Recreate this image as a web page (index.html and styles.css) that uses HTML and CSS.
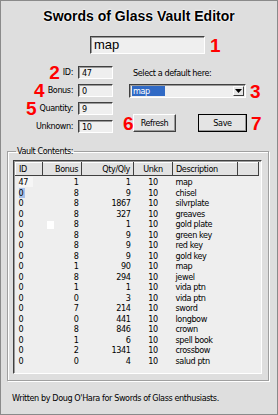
FILE: index.html
```html
<!DOCTYPE html>
<html lang="en">
<head>
    <meta charset="UTF-8">
    <title>Swords of Glass Vault Editor</title>
    <link rel="stylesheet" href="styles.css">
</head>
<body>

    <h1 class="title">Swords of Glass Vault Editor</h1>

    <div class="name-row">
        <div class="field big">map</div>
        <span class="mark">1</span>
    </div>

    <div class="editor">
        <div class="fields">
            <div class="label"><span class="mark">2</span>ID:</div>
            <div class="field">47</div>
            <div class="label"><span class="mark">4</span>Bonus:</div>
            <div class="field">0</div>
            <div class="label"><span class="mark">5</span>Quantity:</div>
            <div class="field">9</div>
            <div class="label">Unknown:</div>
            <div class="field">10</div>
        </div>

        <div class="defaults">
            <div class="hint">Select a default here:</div>
            <div class="pick-row">
                <div class="combo">
                    <span class="combo-value">map</span>
                    <span class="combo-btn">
                        <svg width="7" height="4" viewBox="0 0 7 4"><path d="M0 0h7L3.5 4z" fill="#000"/></svg>
                    </span>
                </div>
                <span class="mark">3</span>
            </div>
            <div class="buttons">
                <span class="mark">6</span>
                <button class="btn">Refresh</button>
                <button class="btn save">Save</button>
                <span class="mark">7</span>
            </div>
        </div>
    </div>

    <fieldset class="vault">
        <legend>Vault Contents:</legend>
        <div class="list">
            <table>
                <colgroup>
                    <col style="width: 27px">
                    <col style="width: 39px">
                    <col style="width: 52px">
                    <col style="width: 39px">
                    <col style="width: 65px">
                    <col>
                </colgroup>
                <thead>
                    <tr>
                        <th>ID</th>
                        <th class="r">Bonus</th>
                        <th class="r">Qty/Qly</th>
                        <th class="c">Unkn</th>
                        <th>Description</th>
                        <th></th>
                    </tr>
                </thead>
                <tbody>
                    <tr><td><span class="focus">47</span></td><td class="r">1</td><td class="r">1</td><td class="c">10</td><td>map</td><td></td></tr>
                    <tr><td><span class="sel">0</span></td><td class="r">8</td><td class="r">9</td><td class="c">10</td><td>chisel</td><td></td></tr>
                    <tr><td>0</td><td class="r">8</td><td class="r">1867</td><td class="c">10</td><td>silvrplate</td><td></td></tr>
                    <tr><td>0</td><td class="r">8</td><td class="r">327</td><td class="c">10</td><td>greaves</td><td></td></tr>
                    <tr><td>0</td><td class="r"><span class="blank"></span>8</td><td class="r">1</td><td class="c">10</td><td>gold plate</td><td></td></tr>
                    <tr><td>0</td><td class="r">8</td><td class="r">9</td><td class="c">10</td><td>green key</td><td></td></tr>
                    <tr><td>0</td><td class="r">8</td><td class="r">9</td><td class="c">10</td><td>red key</td><td></td></tr>
                    <tr><td>0</td><td class="r">8</td><td class="r">9</td><td class="c">10</td><td>gold key</td><td></td></tr>
                    <tr><td>0</td><td class="r">1</td><td class="r">90</td><td class="c">10</td><td>map</td><td></td></tr>
                    <tr><td>0</td><td class="r">8</td><td class="r">294</td><td class="c">10</td><td>jewel</td><td></td></tr>
                    <tr><td>0</td><td class="r">1</td><td class="r">1</td><td class="c">10</td><td>vida ptn</td><td></td></tr>
                    <tr><td>0</td><td class="r">0</td><td class="r">3</td><td class="c">10</td><td>vida ptn</td><td></td></tr>
                    <tr><td>0</td><td class="r">7</td><td class="r">214</td><td class="c">10</td><td>sword</td><td></td></tr>
                    <tr><td>0</td><td class="r">0</td><td class="r">441</td><td class="c">10</td><td>longbow</td><td></td></tr>
                    <tr><td>0</td><td class="r">8</td><td class="r">846</td><td class="c">10</td><td>crown</td><td></td></tr>
                    <tr><td>0</td><td class="r">1</td><td class="r">6</td><td class="c">10</td><td>spell book</td><td></td></tr>
                    <tr><td>0</td><td class="r">2</td><td class="r">1341</td><td class="c">10</td><td>crossbow</td><td></td></tr>
                    <tr><td>0</td><td class="r">0</td><td class="r">4</td><td class="c">10</td><td>salud ptn</td><td></td></tr>
                </tbody>
            </table>
        </div>
    </fieldset>

    <p class="credit">Written by Doug O'Hara for Swords of Glass enthusiasts.</p>

</body>
</html>
```

FILE: styles.css
```css
* {
    box-sizing: border-box;
}
body {
    margin: 0;
    width: 278px;
    height: 415px;
    border: 1px solid #8a8a8a;
    background-color: #dedede;
    font-family: "DejaVu Sans Condensed", "Liberation Sans", Arial, sans-serif;
    font-size: 9px;
    letter-spacing: -0.4px;
    color: #000;
    overflow: hidden;
}
.title {
    margin: 0;
    padding-top: 7px;
    font-family: "Liberation Sans", Arial, sans-serif;
    font-size: 14px;
    line-height: 16px;
    font-weight: bold;
    letter-spacing: 0;
    text-align: center;
    text-shadow: 0 0 1px #fff, 0 0 2px #fff, 0 0 2px #fff;
}
.mark {
    color: #f00;
    font-family: "Liberation Sans", Arial, sans-serif;
    font-weight: bold;
    font-size: 19px;
    letter-spacing: 0;
    line-height: 13px;
}
.field {
    height: 13px;
    background-color: #efefef;
    border: 1px solid;
    border-color: #404040 #fff #fff #404040;
    box-shadow: inset 1px 1px 0 #9a9a9a;
    padding: 1px 0 0 3px;
    font-size: 9px;
    line-height: 10px;
}
.name-row {
    display: flex;
    align-items: center;
    gap: 5px;
    margin-top: 12px;
    padding-left: 89px;
}
.name-row .mark {
    line-height: 17px;
}
.field.big {
    width: 115px;
    height: 18px;
    font-family: "Liberation Sans", Arial, sans-serif;
    font-size: 13px;
    letter-spacing: 0;
    line-height: 14px;
    padding-left: 3px;
}
.editor {
    display: flex;
    margin-top: 12px;
}
.fields {
    display: grid;
    grid-template-columns: 72px 35px;
    grid-auto-rows: 13px;
    column-gap: 5px;
    row-gap: 5px;
}
.label {
    display: flex;
    justify-content: flex-end;
    align-items: center;
    gap: 3px;
    font-size: 9px;
    line-height: 13px;
}
.defaults {
    margin-left: 10px;
    width: 140px;
}
.hint {
    margin-left: 10px;
    margin-top: 2px;
    line-height: 10px;
}
.pick-row {
    display: flex;
    align-items: center;
    gap: 4px;
    margin-top: 6px;
    margin-left: 6px;
}
.combo {
    display: flex;
    align-items: center;
    width: 117px;
    height: 14px;
    background-color: #efefef;
    border: 1px solid;
    border-color: #404040 #fff #fff #404040;
    box-shadow: inset 1px 1px 0 #9a9a9a;
    padding: 1px;
}
.combo-value {
    width: 33px;
    height: 10px;
    margin-left: 1px;
    background-color: #316ac5;
    color: #fff;
    line-height: 10px;
    padding-left: 1px;
}
.combo-btn {
    margin-left: auto;
    width: 11px;
    height: 10px;
    background-color: #e6e6e6;
    border: 1px solid;
    border-color: #fff #404040 #404040 #fff;
    display: flex;
    align-items: center;
    justify-content: center;
}
.buttons {
    display: flex;
    align-items: center;
    margin-top: 16px;
}
.buttons .mark {
    width: 9px;
}
.btn {
    width: 43px;
    height: 18px;
    padding: 0;
    margin-left: 1px;
    background-color: #e4e4e4;
    border: 1px solid;
    border-color: #fff #404040 #404040 #fff;
    box-shadow: inset -1px -1px 0 #9a9a9a;
    font-family: inherit;
    font-size: 9px;
    letter-spacing: inherit;
    color: #000;
}
.btn.save {
    width: 49px;
    margin-left: 22px;
    margin-right: 4px;
    outline: 1px solid #000;
    outline-offset: -1px;
}
.vault {
    margin: 13px 8px 0 6px;
    padding: 4px 6px 6px 5px;
    border: 1px solid #a0a0a0;
    box-shadow: 1px 1px 0 #fff, inset 1px 1px 0 #fff;
}
.vault legend {
    padding: 0 1px;
    margin-left: 3px;
    font-size: 9px;
    line-height: 10px;
}
.list {
    height: 214px;
    background-color: #eeeeee;
    border: 1px solid;
    border-color: #404040 #fff #fff #404040;
    box-shadow: inset 1px 1px 0 #9a9a9a;
    padding: 1px 0 0 1px;
}
.list table {
    width: 244px;
    table-layout: fixed;
    border-collapse: collapse;
}
.list th {
    height: 13px;
    padding: 0 3px;
    font-weight: normal;
    text-align: left;
    background-color: #e2e2e2;
    border: 1px solid;
    border-color: #fff #404040 #404040 #fff;
    line-height: 10px;
}
.list td {
    padding: 0 3px;
    line-height: 10.5px;
    white-space: nowrap;
}
.list tbody tr:first-child td {
    padding-top: 1px;
}
.list .r {
    text-align: right;
}
.list .c {
    text-align: center;
}
.focus {
    display: inline-block;
    width: 14px;
    line-height: 10px;
    background-color: #f6f6f6;
}
.sel {
    display: inline-block;
    padding-right: 2px;
    line-height: 10px;
    background-color: #a9c2ea;
}
.blank {
    display: inline-block;
    width: 7px;
    height: 8px;
    margin-right: 20px;
    background-color: #fff;
    vertical-align: middle;
}
.credit {
    margin: 11px 0 0 11px;
    font-size: 9px;
    line-height: 12px;
}
```
